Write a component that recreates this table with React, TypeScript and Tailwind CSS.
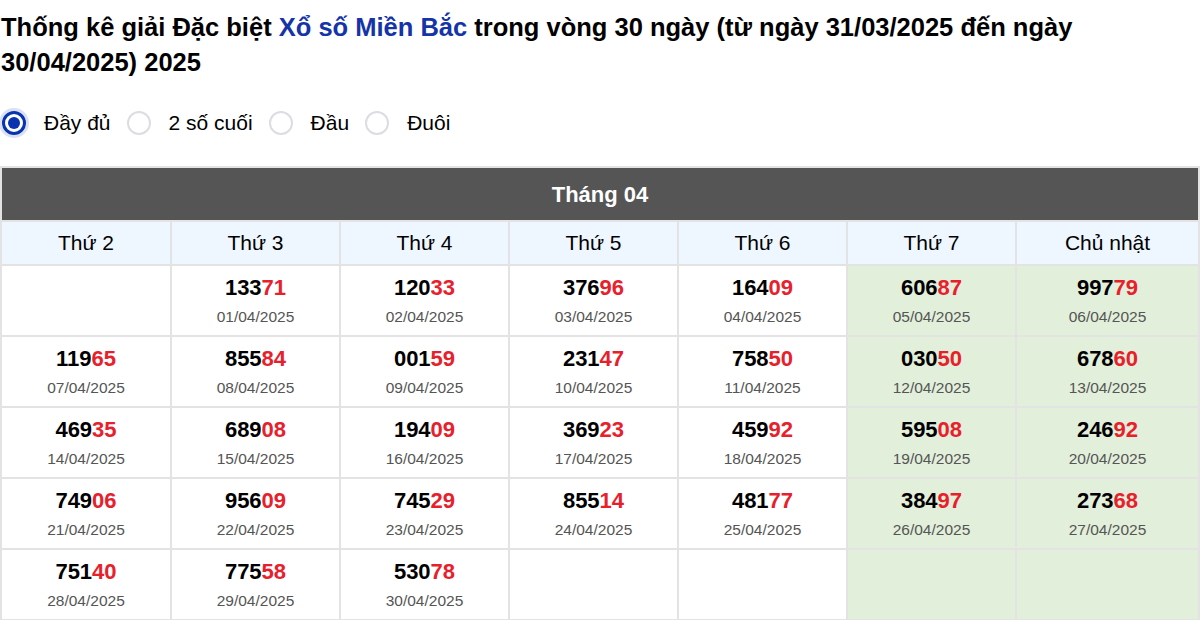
import React, { useState } from 'react';

type Cell = { num: string; date: string } | null;

const weeks: Cell[][] = [
  [null, { num: '13371', date: '01/04/2025' }, { num: '12033', date: '02/04/2025' }, { num: '37696', date: '03/04/2025' }, { num: '16409', date: '04/04/2025' }, { num: '60687', date: '05/04/2025' }, { num: '99779', date: '06/04/2025' }],
  [{ num: '11965', date: '07/04/2025' }, { num: '85584', date: '08/04/2025' }, { num: '00159', date: '09/04/2025' }, { num: '23147', date: '10/04/2025' }, { num: '75850', date: '11/04/2025' }, { num: '03050', date: '12/04/2025' }, { num: '67860', date: '13/04/2025' }],
  [{ num: '46935', date: '14/04/2025' }, { num: '68908', date: '15/04/2025' }, { num: '19409', date: '16/04/2025' }, { num: '36923', date: '17/04/2025' }, { num: '45992', date: '18/04/2025' }, { num: '59508', date: '19/04/2025' }, { num: '24692', date: '20/04/2025' }],
  [{ num: '74906', date: '21/04/2025' }, { num: '95609', date: '22/04/2025' }, { num: '74529', date: '23/04/2025' }, { num: '85514', date: '24/04/2025' }, { num: '48177', date: '25/04/2025' }, { num: '38497', date: '26/04/2025' }, { num: '27368', date: '27/04/2025' }],
  [{ num: '75140', date: '28/04/2025' }, { num: '77558', date: '29/04/2025' }, { num: '53078', date: '30/04/2025' }, null, null, null, null],
];

const days = ['Thứ 2', 'Thứ 3', 'Thứ 4', 'Thứ 5', 'Thứ 6', 'Thứ 7', 'Chủ nhật'];
const modes = ['Đầy đủ', '2 số cuối', 'Đầu', 'Đuôi'];

export default function App() {
  const [mode, setMode] = useState(0);

  return (
    <div className="bg-white text-black font-['Liberation_Sans',Arial,sans-serif]">
      <h1 className="pt-[10px] text-[25.5px] leading-[35px] font-bold pl-[1px]">
        Thống kê giải Đặc biệt <span className="text-[#1434a8]">Xổ số Miền Bắc</span> trong vòng 30 ngày (từ ngày 31/03/2025 đến ngày 30/04/2025) 2025
      </h1>

      <div className="flex items-center mt-[25px] h-[36px]">
        {modes.map((m, i) => (
          <label key={m} className="flex items-center cursor-pointer" onClick={() => setMode(i)}>
            <span
              className={
                i === mode
                  ? 'ml-[2px] w-[24px] h-[24px] rounded-full border-[3px] border-[#0a33b0] flex items-center justify-center shadow-[0_0_0_3px_rgba(10,51,176,0.15)]'
                  : 'w-[24px] h-[24px] rounded-full border-2 border-[#dcdde2]'
              }
            >
              {i === mode && <span className="w-[12px] h-[12px] rounded-full bg-[#0a33b0]" />}
            </span>
            <span className="ml-[18px] mr-[16px] text-[21px] leading-[26px]">{m}</span>
          </label>
        ))}
      </div>

      <table className="mt-[25px] w-[1200px] table-fixed border-collapse">
        <colgroup>
          <col className="w-[170px]" />
          <col className="w-[169px]" />
          <col className="w-[169px]" />
          <col className="w-[169px]" />
          <col className="w-[169px]" />
          <col className="w-[169px]" />
          <col />
        </colgroup>
        <thead>
          <tr>
            <th colSpan={7} className="h-[54px] bg-[#555555] text-white text-[22px] font-bold border-2 border-[#e3e3e3]">
              Tháng 04
            </th>
          </tr>
          <tr>
            {days.map((d) => (
              <th key={d} className="h-[44px] bg-[#eef6ff] text-[21px] font-normal border-2 border-[#e3e3e3]">
                {d}
              </th>
            ))}
          </tr>
        </thead>
        <tbody>
          {weeks.map((w, ri) => (
            <tr key={ri}>
              {w.map((c, ci) => (
                <td
                  key={ci}
                  className={
                    'h-[71px] border-2 border-[#e3e3e3] text-center align-middle ' +
                    (ci >= 5 ? 'bg-[#e2efda]' : 'bg-white')
                  }
                >
                  {c && (
                    <div className="flex flex-col items-center pt-[1px]">
                      <div className="text-[22px] font-bold leading-[26px]">
                        {c.num.slice(0, 3)}
                        <span className="text-[#e8202b]">{c.num.slice(3)}</span>
                      </div>
                      <div className="mt-[6px] text-[15.5px] leading-[20px] text-[#555555]">{c.date}</div>
                    </div>
                  )}
                </td>
              ))}
            </tr>
          ))}
        </tbody>
      </table>
    </div>
  );
}
